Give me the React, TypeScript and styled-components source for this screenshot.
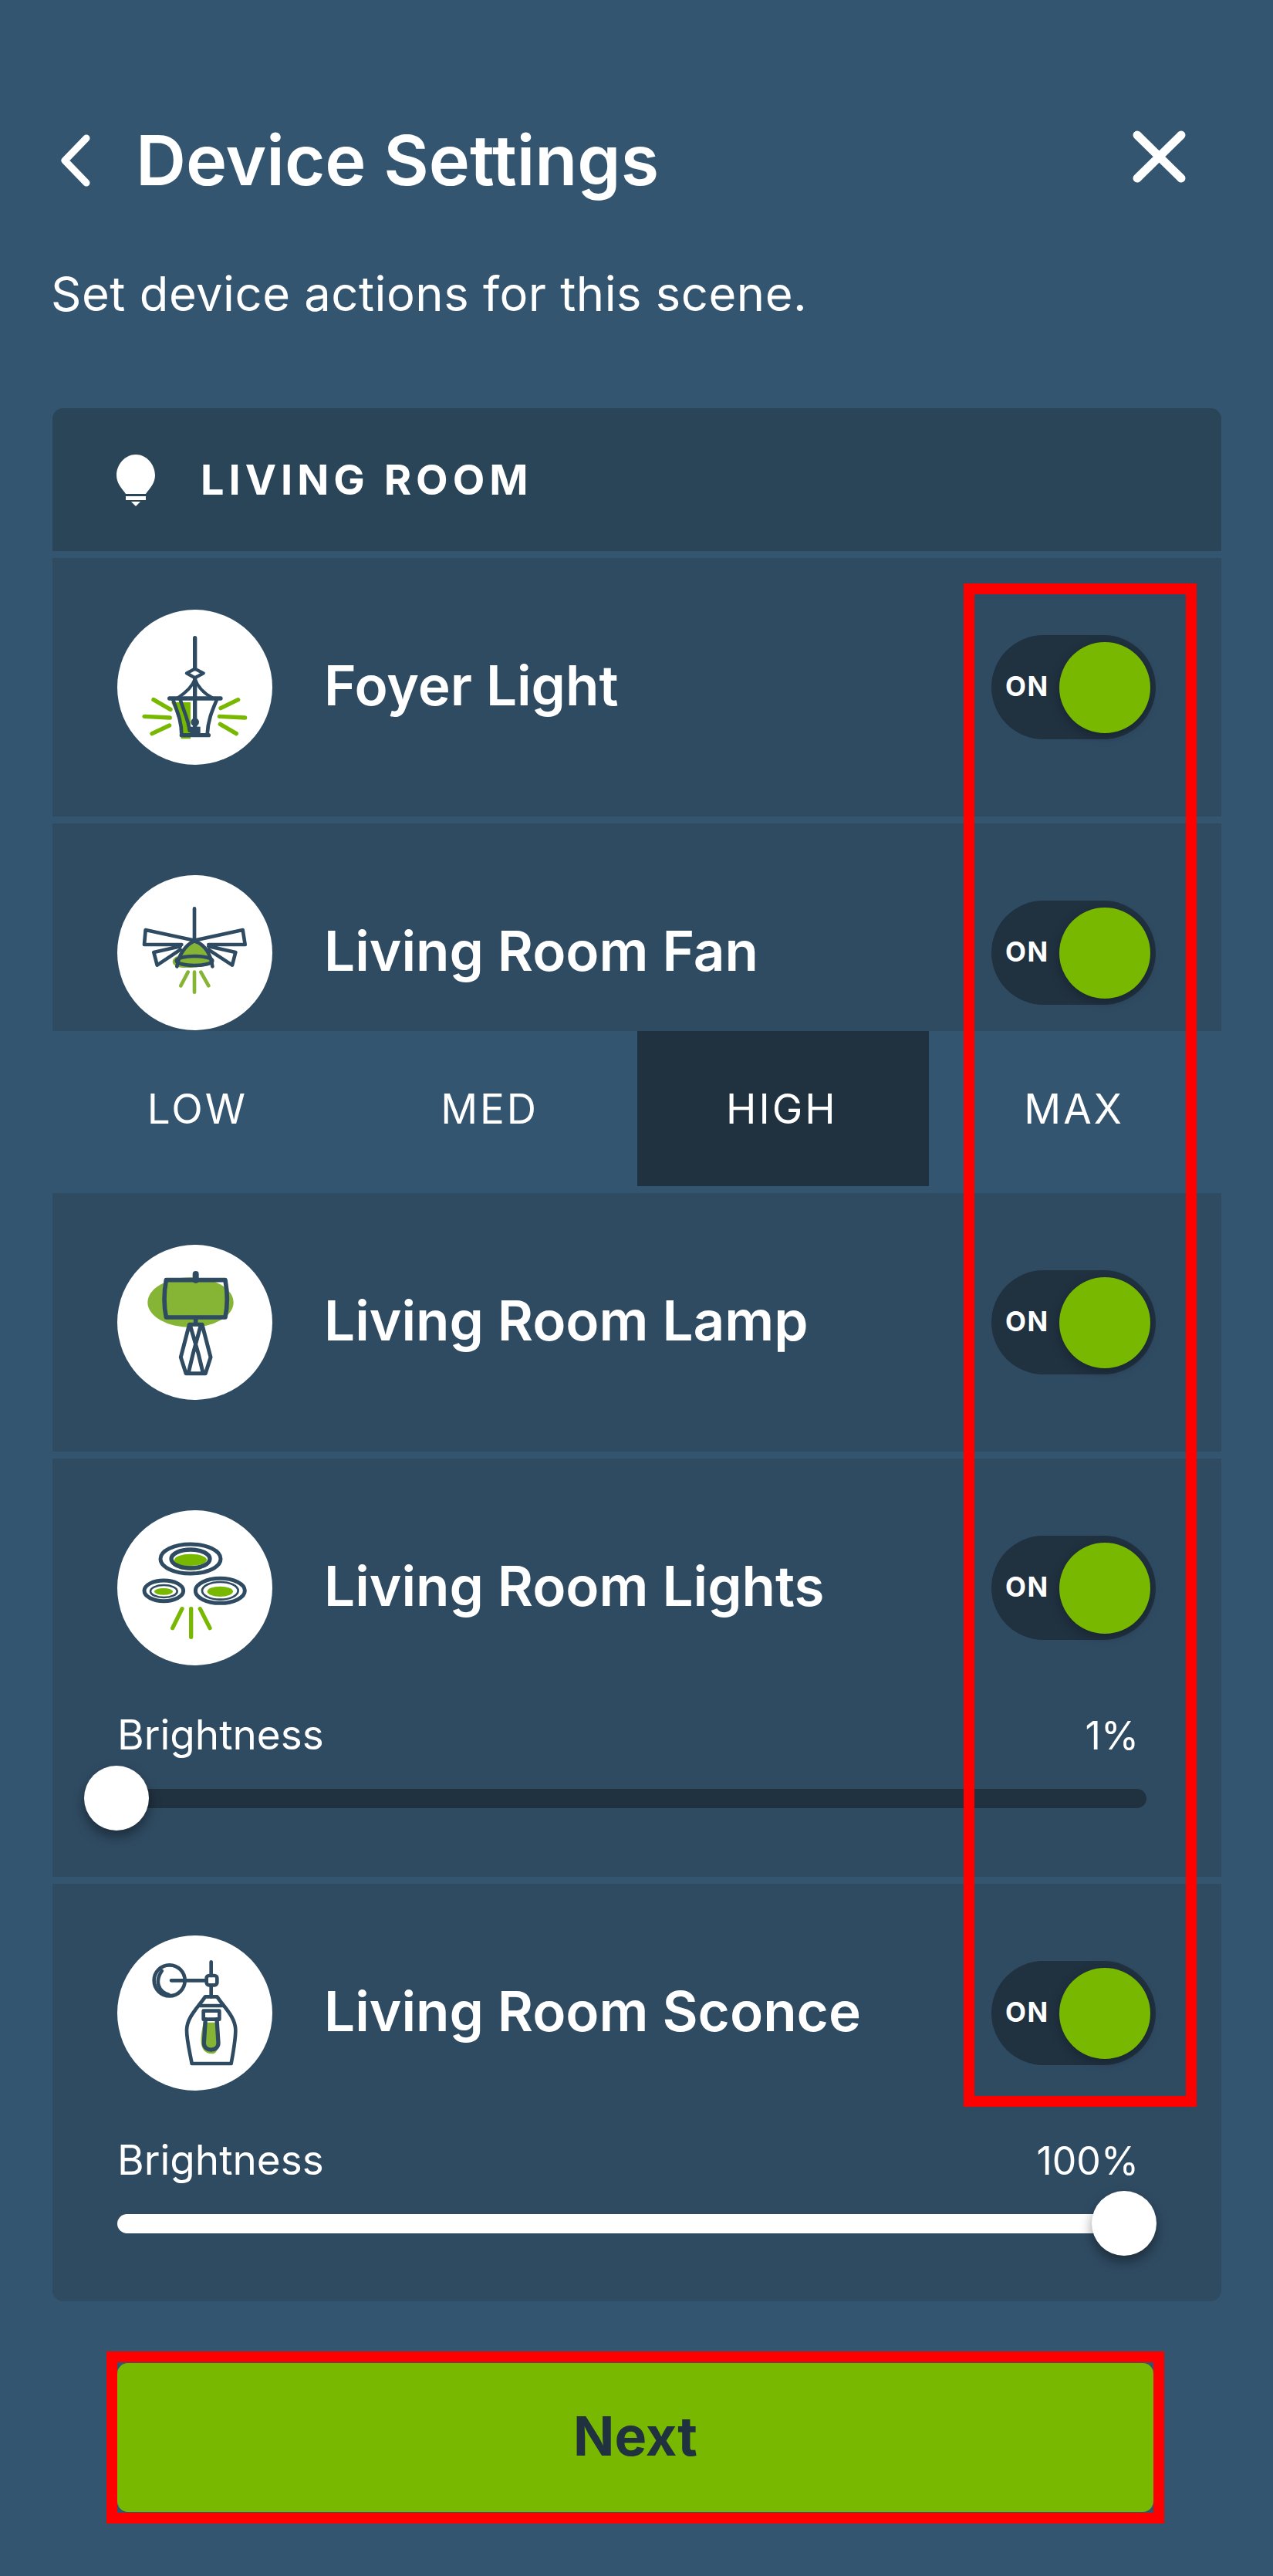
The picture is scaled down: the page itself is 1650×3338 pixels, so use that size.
import styled, { createGlobalStyle } from "styled-components";

const NAVY = "#2f4b62";
const LEAF = "#86b536";
const GREEN = "#78b800";

const GlobalStyle = createGlobalStyle`
    html, body {
        margin: 0;
        padding: 0;
        background: #345570;
    }
    * {
        box-sizing: border-box;
    }
`;

function FoyerIcon() {
    return (
        <IconSvg viewBox="95 60 603 603">
            <path d="M305 420 L380 420 L380 562 L343 562 C345 510 325 460 305 420Z" fill={GREEN} />
            <Stroke stroke={GREEN} d="M236 410 L302 448 M200 475 L300 480 M230 542 L298 510 M565 410 L497 443 M492 475 L592 480 M495 505 L558 542" />
            <Stroke stroke={NAVY} d="M397 170 V290 M397 325 V540 M298 405 H497 M345 548 H450" />
            <Stroke stroke={NAVY} strokeWidth={13} d="M397 290 L430 307 L397 325 L365 307Z" />
            <Stroke stroke={NAVY} strokeWidth={12} d="M397 330 C385 365 350 390 330 403 M397 330 C410 365 440 390 465 403" />
            <Stroke stroke={NAVY} strokeWidth={14} d="M312 410 C325 450 345 490 345 545 M482 410 C465 450 447 490 445 545 M340 410 C352 450 372 490 376 530" />
            <circle cx={397} cy={497} r={16} fill={NAVY} />
            <rect x={378} y={515} width={40} height={30} fill={NAVY} />
        </IconSvg>
    );
}

function FanIcon() {
    return (
        <IconSvg viewBox="95 75 603 603">
            <path d="M395 340 C440 350 460 395 465 420 C430 435 340 440 325 430 C300 420 310 395 330 390 C345 360 370 345 395 340Z" fill={LEAF} />
            <Stroke stroke={NAVY} strokeWidth={14} d="M395 205 V320 M390 328 L205 288 L200 345 L345 345 M400 328 L583 288 L592 345 L450 345 M340 352 L237 375 L250 425 L340 365 M450 352 L555 375 L542 425 L450 365" />
            <Stroke stroke={NAVY} strokeWidth={14} d="M395 332 C440 345 460 390 465 430 M395 332 C360 345 335 385 327 430" />
            <ellipse cx={395} cy={408} rx={70} ry={18} fill="none" stroke={NAVY} strokeWidth={14} />
            <Stroke stroke={LEAF} strokeWidth={14} d="M370 452 L342 505 M395 452 V530 M420 452 L450 505" />
        </IconSvg>
    );
}

function LampIcon() {
    return (
        <IconSvg viewBox="95 68 603 603">
            <ellipse cx={380} cy={292} rx={167} ry={97} fill={LEAF} />
            <Stroke stroke={NAVY} strokeWidth={24} d="M400 182 V205" />
            <Stroke stroke={NAVY} strokeWidth={17} d="M285 205 H515 C525 260 525 300 515 350 H285 C275 300 275 260 285 205Z M400 350 V375" />
            <path d="M378 385 H420 L452 505 L434 562 H366 L348 505Z" fill="#fff" />
            <Stroke stroke={NAVY} strokeWidth={15} d="M375 378 H425 L458 505 L438 568 H362 L342 505Z M378 380 L410 490 L428 565 M420 380 L390 490 L372 565" />
        </IconSvg>
    );
}

function LightsIcon() {
    return (
        <IconSvg viewBox="95 52 603 603">
            <path d="M298 245 C310 285 370 290 420 282 L340 250Z" fill={GREEN} />
            <ellipse cx={380} cy={245} rx={63} ry={23} fill={GREEN} />
            <ellipse cx={380} cy={241} rx={117} ry={57} fill="none" stroke={NAVY} strokeWidth={15} />
            <ellipse cx={380} cy={241} rx={75} ry={36} fill="none" stroke={NAVY} strokeWidth={16} />
            <ellipse cx={275} cy={368} rx={36} ry={13} fill={GREEN} />
            <ellipse cx={276} cy={365} rx={76} ry={40} fill="none" stroke={NAVY} strokeWidth={15} />
            <ellipse cx={276} cy={367} rx={52} ry={24} fill="none" stroke={NAVY} strokeWidth={8} />
            <ellipse cx={495} cy={368} rx={50} ry={20} fill={GREEN} />
            <ellipse cx={495} cy={365} rx={96} ry={48} fill="none" stroke={NAVY} strokeWidth={15} />
            <ellipse cx={495} cy={365} rx={70} ry={34} fill="none" stroke={NAVY} strokeWidth={8} />
            <Stroke stroke={GREEN} d="M347 435 L310 510 M382 435 V545 M417 435 L455 510" />
        </IconSvg>
    );
}

function SconceIcon() {
    return (
        <IconSvg viewBox="95 52 603 603">
            <path d="M430 390 C420 440 405 510 465 512 C490 510 495 470 488 390Z" fill={LEAF} />
            <Stroke stroke={NAVY} strokeWidth={14} d="M268 190 C240 230 255 270 295 282 M305 227 H440 M460 155 V208 M460 245 V290" />
            <circle cx={298} cy={227} r={60} fill="none" stroke={NAVY} strokeWidth={14} />
            <rect x={442} y={208} width={41} height={37} rx={10} fill="none" stroke={NAVY} strokeWidth={14} />
            <Stroke stroke={NAVY} strokeWidth={14} d="M437 290 H483 C510 330 555 370 555 420 C555 460 545 510 538 550 H385 C378 510 365 460 365 420 C365 370 410 330 437 290Z M415 325 H505 M430 345 H492 V378 H430Z" />
            <Stroke stroke={NAVY} strokeWidth={16} d="M438 378 L432 470 C432 505 488 505 488 470 L482 378" />
        </IconSvg>
    );
}

function BulbIcon() {
    return (
        <BulbSvg viewBox="0 0 52 68">
            <path d="M26 1 C40 1 51 14 51 28 C51 38 44 45 39 52 H13 C8 45 1 38 1 28 C1 14 12 1 26 1Z" fill="#fff" />
            <rect x={13} y={55} width={26} height={5} fill="#fff" />
            <path d="M20 62 H32 L26 68Z" fill="#fff" />
        </BulbSvg>
    );
}

function Toggle() {
    return (
        <ToggleTrack>
            <ToggleLabel>ON</ToggleLabel>
            <ToggleKnob />
        </ToggleTrack>
    );
}

function Brightness({ value }: { value: number }) {
    // thumb runs from -43px to 1263px over the 1334px track
    const thumbLeft = -43 + ((value - 1) / 99) * 1306;
    return (
        <>
            <SliderHead>
                <span>Brightness</span>
                <SliderValue>{value}%</SliderValue>
            </SliderHead>
            <SliderTrack>
                {value > 1 && <SliderFill style={{ width: thumbLeft + 42 }} />}
                <SliderThumb style={{ left: thumbLeft }} />
            </SliderTrack>
        </>
    );
}

const speeds = ["LOW", "MED", "HIGH", "MAX"];

export default function App() {
    return (
        <Page>
            <GlobalStyle />
            <TopBar>
                <BackIcon viewBox="0 0 40 68">
                    <polyline points="34,5 6,34 34,63" fill="none" stroke="#fff" strokeWidth={9} strokeLinecap="round" strokeLinejoin="round" />
                </BackIcon>
                <Title>Device Settings</Title>
                <CloseIcon viewBox="0 0 69 68">
                    <path d="M6 6 L63 62 M63 6 L6 62" fill="none" stroke="#fff" strokeWidth={11} strokeLinecap="round" />
                </CloseIcon>
            </TopBar>
            <Subtitle>Set device actions for this scene.</Subtitle>
            <Card>
                <CardHeader>
                    <BulbIcon />
                    <RoomName>LIVING ROOM</RoomName>
                </CardHeader>
                <DeviceRow>
                    <DeviceHead>
                        <IconCircle><FoyerIcon /></IconCircle>
                        <DeviceName>Foyer Light</DeviceName>
                        <Toggle />
                    </DeviceHead>
                </DeviceRow>
                <FanGroup>
                    <FanRow>
                        <DeviceHead>
                            <IconCircle><FanIcon /></IconCircle>
                            <DeviceName>Living Room Fan</DeviceName>
                            <Toggle />
                        </DeviceHead>
                    </FanRow>
                    <SpeedBar>
                        {speeds.map((speed) => (
                            <SpeedOption key={speed} $active={speed === "HIGH"}>{speed}</SpeedOption>
                        ))}
                    </SpeedBar>
                </FanGroup>
                <DeviceRow>
                    <DeviceHead>
                        <IconCircle><LampIcon /></IconCircle>
                        <DeviceName>Living Room Lamp</DeviceName>
                        <Toggle />
                    </DeviceHead>
                </DeviceRow>
                <SliderRow>
                    <DeviceHead>
                        <IconCircle><LightsIcon /></IconCircle>
                        <DeviceName>Living Room Lights</DeviceName>
                        <Toggle />
                    </DeviceHead>
                    <Brightness value={1} />
                </SliderRow>
                <LastRow>
                    <DeviceHead>
                        <IconCircle><SconceIcon /></IconCircle>
                        <DeviceName>Living Room Sconce</DeviceName>
                        <Toggle />
                    </DeviceHead>
                    <Brightness value={100} />
                </LastRow>
            </Card>
            <NextButton>Next</NextButton>
            <ToggleHighlight />
            <ButtonHighlight />
        </Page>
    );
}

const Page = styled.div`
    position: relative;
    width: 1650px;
    height: 3338px;
    padding: 158px 67px 0 68px;
    background: #345570;
    font-family: Inter, "Liberation Sans", sans-serif;
    color: #fff;
    overflow: hidden;
`;

const TopBar = styled.div`
    display: flex;
    align-items: center;
    height: 100px;
`;

const BackIcon = styled.svg`
    width: 40px;
    height: 68px;
    margin-left: 10px;
`;

const Title = styled.h1`
    margin: 0 0 0 58px;
    font-size: 90px;
    font-weight: 600;
    line-height: 100px;
`;

const CloseIcon = styled.svg`
    width: 69px;
    height: 68px;
    margin: 0 46px 10px auto;
`;

const Subtitle = styled.p`
    margin: 87px 0 0 -2px;
    font-size: 61.5px;
    font-weight: 400;
    line-height: 72px;
    letter-spacing: 0.5px;
`;

const Card = styled.section`
    display: flex;
    flex-direction: column;
    gap: 9px;
    margin-top: 112px;
`;

const CardHeader = styled.div`
    display: flex;
    align-items: center;
    height: 185px;
    padding-left: 82px;
    background: #2a4458;
    border-radius: 14px 14px 0 0;
`;

const BulbSvg = styled.svg`
    width: 52px;
    height: 68px;
`;

const RoomName = styled.span`
    margin-left: 58px;
    font-size: 54px;
    font-weight: 700;
    letter-spacing: 6px;
`;

const DeviceRow = styled.div`
    padding: 67px 85px 0 84px;
    background: ${NAVY};
`;

const FanGroup = styled.div`
    display: flex;
    flex-direction: column;
`;

const FanRow = styled(DeviceRow)`
    height: 269px;
`;

const SliderRow = styled(DeviceRow)`
    height: 542px;
`;

const LastRow = styled(SliderRow)`
    height: 541px;
    border-radius: 0 0 14px 14px;
`;

const DeviceHead = styled.div`
    display: flex;
    align-items: center;
    height: 201px;
    margin-bottom: 67px;

    ${FanRow} & {
        margin-bottom: 0;
    }
`;

const IconCircle = styled.div`
    flex: none;
    width: 201px;
    height: 201px;
    border-radius: 50%;
    background: #fff;
    overflow: hidden;
`;

const IconSvg = styled.svg`
    display: block;
    width: 100%;
    height: 100%;
`;

const Stroke = styled.path.attrs<{ strokeWidth?: number }>((props) => ({
    strokeWidth: props.strokeWidth ?? 16,
}))`
    fill: none;
    stroke-linecap: round;
    stroke-linejoin: round;
`;

const DeviceName = styled.span`
    margin: 0 0 6px 67px;
    font-size: 71px;
    font-weight: 600;
`;

const ToggleTrack = styled.div`
    display: flex;
    align-items: center;
    justify-content: space-between;
    width: 213px;
    height: 135px;
    margin-left: auto;
    padding: 0 7px 0 18px;
    background: #203140;
    border-radius: 68px;
`;

const ToggleLabel = styled.span`
    margin-bottom: 3px;
    font-size: 35px;
    font-weight: 700;
    letter-spacing: 1.5px;
`;

const ToggleKnob = styled.div`
    width: 118px;
    height: 118px;
    border-radius: 50%;
    background: ${GREEN};
    box-shadow: 0 4px 14px rgba(0, 0, 0, 0.25);
`;

const SpeedBar = styled.div`
    display: grid;
    grid-template-columns: repeat(4, 1fr);
    height: 201px;
`;

const SpeedOption = styled.div<{ $active: boolean }>`
    display: flex;
    align-items: center;
    justify-content: center;
    padding-right: 3px;
    font-size: 53px;
    font-weight: 400;
    letter-spacing: 3px;
    background: ${({ $active }) => ($active ? "#203140" : "transparent")};
`;

const SliderHead = styled.div`
    display: flex;
    justify-content: space-between;
    align-items: baseline;
    margin: -7px 22px 0 0;
    font-size: 53px;
    line-height: 60px;
`;

const SliderValue = styled.span`
    font-size: 50px;
`;

const SliderTrack = styled.div`
    position: relative;
    width: 1334px;
    height: 25px;
    margin-top: 39px;
    background: #203140;
    border-radius: 13px;
`;

const SliderFill = styled.div`
    height: 100%;
    background: #fff;
    border-radius: 13px 0 0 13px;
`;

const SliderThumb = styled.div`
    position: absolute;
    top: -30px;
    width: 84px;
    height: 84px;
    border-radius: 50%;
    background: #fff;
    box-shadow: 0 8px 16px rgba(0, 0, 0, 0.4);
`;

const NextButton = styled.button`
    display: block;
    width: 1343px;
    height: 193px;
    margin: 80px 0 0 84px;
    padding: 0 0 5px;
    border: none;
    border-radius: 14px;
    background: ${GREEN};
    color: #203140;
    font-family: inherit;
    font-size: 70px;
    font-weight: 700;
`;

const ToggleHighlight = styled.div`
    position: absolute;
    left: 1249px;
    top: 756px;
    width: 302px;
    height: 1974px;
    border: 14px solid #ff0000;
`;

const ButtonHighlight = styled.div`
    position: absolute;
    left: 138px;
    top: 3047px;
    width: 1371px;
    height: 223px;
    border: 14px solid #ff0000;
`;
